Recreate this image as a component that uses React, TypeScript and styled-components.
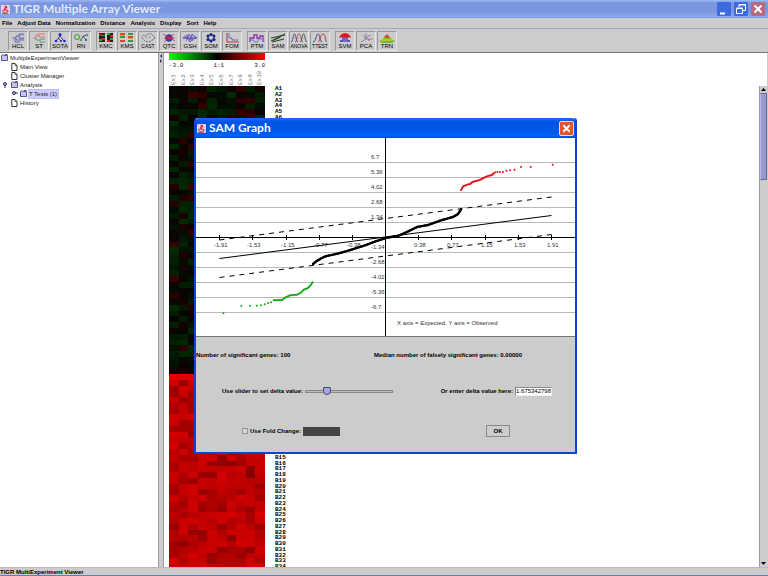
import React from "react";
import styled, { createGlobalStyle, css } from "styled-components";

const GlobalStyle = createGlobalStyle`
  * { box-sizing: border-box; }
  html, body { margin: 0; height: 100%; overflow: hidden; }
  body, button, input { font-family: "Liberation Sans", Arial, sans-serif; font-size: 6px; color: #000; }
`;

const Window = styled.div`
  position: relative;
  display: flex;
  flex-direction: column;
  height: 100vh;
  background: #ccc;
  overflow: hidden;
`;

const TitleBar = styled.header`
  display: flex;
  align-items: center;
  height: 18px;
  flex: none;
  padding: 0 3px 0 1px;
  gap: 3px;
  background: linear-gradient(#9db9f5 0, #7c97e2 3px, #7a95de 11px, #86a4ea 15px, #86a8ee 17px, #7890cc 18px);
`;

const Title = styled.h1`
  flex: 1;
  margin: 0;
  font: 700 12px/16px Lato, sans-serif;
  color: #e2e9fa;
  white-space: nowrap;
`;

const Caption = styled.button<{ $close?: boolean }>`
  width: 14px;
  height: 14px;
  padding: 0;
  border: 0;
  border-radius: 1px;
  background: ${(p) => (p.$close ? "#b56a80" : "#3c6be0")};
  svg { display: block; }
`;

const MenuBar = styled.nav`
  display: flex;
  align-items: center;
  gap: 5px;
  height: 11px;
  flex: none;
  padding: 0 2px;
  border-bottom: 1px solid #a8a8c0;
`;

const MenuItem = styled.button`
  padding: 0;
  border: 0;
  background: none;
  font-weight: bold;
  line-height: 8px;
`;

const Toolbar = styled.div`
  display: flex;
  align-items: center;
  height: 24px;
  flex: none;
  padding-left: 8px;
  gap: 5px;
  border-bottom: 1px solid #777;
`;

const ToolGroup = styled.div`
  display: flex;
  gap: 1px;
`;

const ToolButton = styled.button<{ $small?: boolean }>`
  display: flex;
  flex-direction: column;
  align-items: center;
  justify-content: center;
  width: 20px;
  height: 20px;
  padding: 1px 0 0;
  border: 1px solid #999;
  border-right-color: #e8e8e8;
  border-bottom-color: #e8e8e8;
  background: #ccc;
  font-size: ${(p) => (p.$small ? 5 : 6)}px;
  line-height: 7px;
  svg { display: block; flex: none; }
`;

const Body = styled.main`
  display: flex;
  flex: 1;
  min-height: 0;
`;

const TreePane = styled.ul`
  flex: none;
  width: 159px;
  margin: 0;
  padding: 0;
  list-style: none;
  background: #fff;
  border-right: 1px solid #999;
`;

const TreeRow = styled.li<{ $depth: number }>`
  display: flex;
  align-items: center;
  height: 9px;
  gap: 2px;
  padding-left: ${(p) => [1, 11, 20][p.$depth]}px;
  ${(p) => p.$depth > 0 && css`svg:first-child:nth-last-child(3) { margin-left: -9px; }`}
`;

const TreeLabel = styled.span<{ $selected?: boolean }>`
  line-height: 8px;
  color: #222;
  ${(p) => p.$selected && css`background: #ccccff; padding-right: 1px; outline: 1px solid #c0c0e8;`}
`;

const Splitter = styled.div`
  flex: none;
  width: 5px;
  background: #ccc;
  border-right: 1px solid #999;
`;

const Viewer = styled.section`
  display: flex;
  flex-direction: column;
  flex: 1;
  min-width: 0;
  padding-left: 5px;
  background: #fff;
  border-right: 1px solid #ccc;
`;

const Header = styled.div`
  flex: none;
  width: 96px;
  height: 33px;
  font-family: "Liberation Mono", monospace;
`;

const Gradient = styled.div`
  height: 7px;
  background: linear-gradient(90deg, #0f0, #000 50%, #f00);
`;

const Scale = styled.div`
  display: flex;
  justify-content: space-between;
  height: 10px;
  line-height: 12px;
  color: #222;
`;

const Columns = styled.div`
  display: grid;
  grid-template-columns: repeat(10, 1fr);
  height: 15px;
  color: #777;
`;

const ColumnName = styled.span`
  writing-mode: vertical-rl;
  transform: rotate(180deg);
  line-height: 9px;
`;

const Scroller = styled.div`
  display: flex;
  flex: 1;
  min-height: 0;
  overflow: hidden;
`;

const RowNames = styled.div`
  display: grid;
  grid-template-rows: repeat(84, 1fr);
  height: 484px;
  flex: 1;
  padding-left: 10px;
  font: bold 6px/6px "Liberation Mono", monospace;
  span { min-height: 0; }
`;

const ScrollTrack = styled.div`
  display: flex;
  flex-direction: column;
  width: 8px;
  background: #ccc;
  border-left: 1px solid #999;
`;

const ScrollButton = styled.button`
  height: 7px;
  padding: 0;
  border: 0;
  background: #ccc;
  svg { display: block; }
`;

const ScrollThumb = styled.div`
  height: 18%;
  background: #9999cc;
  border: 1px solid #666699;
  border-left-color: #b8b8e8;
`;

const Spacer = styled.div`
  flex: 1;
`;

const Status = styled.footer`
  flex: none;
  height: 9px;
  border-top: 1px solid #b8b8cc;
  border-bottom: 1px solid #5b7fc0;
  font-weight: bold;
  line-height: 9px;
`;

const Dialog = styled.section`
  position: absolute;
  left: 194px;
  top: 118px;
  width: 383px;
  background: #ccc;
  border: 2px solid #0a46d2;
  border-top: 0;
  border-radius: 3px 3px 0 0;
`;

const DialogTitle = styled.div`
  display: flex;
  align-items: center;
  height: 20px;
  gap: 3px;
  padding: 0 1px;
  background: linear-gradient(#1c6cf8 0, #0054e3 4px, #0058ee 14px, #0062fa 18px, #0044c4 20px);
  border-radius: 3px 3px 0 0;
`;

const DialogName = styled.h2`
  flex: 1;
  margin: 0;
  font: 700 12px/18px Lato, sans-serif;
  color: #fff;
`;

const CloseButton = styled.button`
  width: 15px;
  height: 15px;
  padding: 0;
  border: 1px solid #f4d8cc;
  border-radius: 2px;
  background: #e0532c;
  svg { display: block; }
`;

const Chart = styled.svg`
  display: block;
  width: 100%;
  background: #fff;
  border-bottom: 1px solid #777;
  font-family: "Liberation Sans", Arial, sans-serif;
  font-size: 6px;
`;

const Panel = styled.div`
  font-weight: bold;
`;

const PanelRow = styled.div<{ $height: number }>`
  display: grid;
  grid-template-columns: 178px 1fr;
  align-items: center;
  height: ${(p) => p.$height}px;
`;

const Field = styled.div<{ $indent?: number }>`
  display: flex;
  align-items: center;
  gap: 2px;
  padding-left: ${(p) => p.$indent ?? 0}px;
  white-space: nowrap;
`;

const SliderRow = styled.div`
  display: flex;
  align-items: center;
  justify-content: space-between;
  height: 38px;
  padding: 0 23px 0 26px;
`;

const Slider = styled.input`
  appearance: none;
  width: 88px;
  height: 9px;
  margin: 0;
  background: none;
  &::-webkit-slider-runnable-track {
    height: 3px;
    background: #bbb;
    border: 1px solid #888;
  }
  &::-webkit-slider-thumb {
    appearance: none;
    width: 8px;
    height: 8px;
    margin-top: -4px;
    background: #a8a8dc;
    border: 1px solid #444480;
    border-radius: 1px 1px 4px 4px;
  }
`;

const TextBox = styled.input<{ $off?: boolean }>`
  width: 37px;
  height: 9px;
  padding: 0;
  border: 1px solid #888;
  border-right-color: #eee;
  border-bottom-color: #eee;
  background: #fff;
  ${(p) => p.$off && css`background: #444; border-color: #444;`}
`;

const CheckBox = styled.input`
  appearance: none;
  width: 6px;
  height: 6px;
  margin: 0;
  border: 1px solid #999;
  background: #d4d4d4;
`;

const OkButton = styled.button`
  width: 24px;
  height: 12px;
  padding: 0;
  border: 1px solid #888;
  background: #ccc;
  font-weight: bold;
`;

const JavaCup = ({ size }: { size: number }) => (
  <svg width={size} height={size} viewBox="0 0 10 10" fill="none">
    <rect width="10" height="10" rx="1" fill="#e6d3e6" />
    <path d="M4 1.2c2 .6 2 1.6.5 2.3S4 5 5.5 5.2M6.500 1.500C5.800 2.200 5.800 3 7 3.600" stroke="#d4243c" strokeWidth="1.300" />
    <path d="M1.800 5.800h5.400c0 2-1 2.800-2.700 2.800S1.800 7.800 1.800 5.800zM7.200 6.200c1.600 0 1.200 1.500-.3 1.500M1 9.300h7" stroke="#c83450" />
  </svg>
);

const Cross = ({ size }: { size: number }) => (
  <svg width={size} height={size} viewBox="0 0 14 14">
    <path d="M3.500 3.500l7 7M10.500 3.500l-7 7" stroke="#fff" strokeWidth="2" />
  </svg>
);

const Folder = () => (
  <svg width="7" height="7" viewBox="0 0 7 7">
    <path d="M.5 6.500v-5L1.500.5 3 1.500h3.500v5z" fill="#c4c4f4" stroke="#55558c" />
    <path d="M4 .5h2.500" stroke="#55558c" />
  </svg>
);

const Leaf = () => (
  <svg width="7" height="8" viewBox="0 0 7 8">
    <path d="M.8.5h3.200l2 2v5H.8z" fill="#fff" stroke="#333" />
    <path d="M4 .5v2h2" fill="none" stroke="#333" strokeWidth=".7" />
  </svg>
);

const Handle = ({ open }: { open?: boolean }) => (
  <svg width="7" height="7" viewBox="0 0 7 7">
    <circle cx="3" cy="3" r="1.500" fill="#aac" stroke="#336" />
    <path d={open ? "M3 4v3" : "M4 3h3"} stroke="#336" />
  </svg>
);

const art: Record<string, React.ReactNode> = {
  HCL: <g fill="none" stroke="#6464b8"><path d="M14 1H9v4h5M9 3H6v4h8M6 5H2M10 9H5V6" /><path d="M9 2h5M9 6h5" strokeWidth=".6" /></g>,
  ST: <g fill="none"><path d="M14 1H8v3h6M8 2H5v3H2" stroke="#d87868" /><path d="M14 6H9v3h5M9 7H5V5" stroke="#58a080" /></g>,
  SOTA: <g><path d="M8 1v2L4 8M8 3l4 5M6 5l3 3" fill="none" stroke="#446" /><g fill="#22c"><circle cx="8" cy="1.500" r="1.500" /><circle cx="4" cy="8" r="1.300" /><circle cx="9" cy="8" r="1.100" /><circle cx="12.500" cy="8" r="1.300" /></g></g>,
  RN: <g fill="none"><circle cx="4" cy="4" r="2.500" stroke="#393" /><path d="M8 7l2-4 4-1M10 3l3 4" stroke="#558" /><g fill="#4a5"><circle cx="8" cy="7" r="1.300" /><circle cx="14" cy="2" r="1.200" /></g><circle cx="13" cy="7" r="1" fill="#33a" /></g>,
  KMC: <g><path fill="#222" d="M1 0h6v9H1zM9 0h6v9H9z" /><path fill="#d22" d="M1 1h3v2H1zM4 5h3v2H4zM12 2h3v2h-3zM9 7h3v2H9z" /><path fill="#2a3" d="M4 2h3v1H4zM1 6h3v2H1zM9 0h3v2H9zM12 5h3v2h-3z" /></g>,
  KMS: <g><path fill="#d43" d="M1 0h5v2H1zM9 3h5v2H9zM1 7h5v2H1z" /><path fill="#395" d="M9 0h5v2H9zM1 3h5v2H1zM9 7h5v2H9z" /><path d="M1 2.500h5M9 5.500h5" stroke="#ca3" /></g>,
  CAST: <g fill="none" stroke="#667"><path d="M3 6c-3-2 0-5 3-3 1-3 7-3 7 0 3 1 1 4-1 4-2 3-7 2-9-1z" strokeDasharray="2 1" /><path d="M5 4l2 1M9 3l1 2" stroke="#88b" /></g>,
  QTC: <g fill="none"><circle cx="8" cy="5" r="3.300" fill="#448" stroke="#33a" /><path d="M2 1l12 7M13 1L3 9M3 5h11" stroke="#a36" strokeWidth=".8" /><circle cx="8" cy="5" r="1.600" fill="#d23" /></g>,
  GSH: <g fill="#a8a0dc" stroke="#6048b0" strokeWidth=".8"><path d="M1 5l4-3 3 5 2-6 5 4-4 1-3 3-3-4z" /><path fill="none" d="M4 8l3-7 4 7M1 5h14" /></g>,
  SOM: <g><circle cx="8" cy="4.500" r="3" fill="none" stroke="#147" /><g fill="#128"><circle cx="8" cy="1.500" r="1.500" /><circle cx="11" cy="3" r="1.500" /><circle cx="11" cy="6.500" r="1.500" /><circle cx="8" cy="8" r="1.500" /><circle cx="5" cy="6.500" r="1.500" /><circle cx="5" cy="3" r="1.500" /></g></g>,
  FOM: <g fill="none"><path d="M3 0v9h12" stroke="#b33" /><path d="M5 0v5h3v2h6" stroke="#66b" /></g>,
  PTM: <g fill="none"><path d="M1 9V5h4V2h3v3h3V3h3v6" stroke="#83a" strokeWidth="1.300" /><path d="M2 7h3v2h4V6h4" stroke="#66c" strokeWidth=".8" /></g>,
  SAM: <g fill="none"><path d="M1 8L15 1M1 5l14-3M2 9l12-3" stroke="#333" /><path d="M3 8c3-3 5-1 9-6" stroke="#262" strokeWidth="1.300" /></g>,
  ANOVA: <g fill="none" strokeWidth=".9"><path d="M0 9c2 0 2-8 3.500-8S5 9 7 9" stroke="#338" /><path d="M4 9c2 0 2-8 4-8s2 8 4 8" stroke="#a44" /><path d="M9 9c2 0 2-8 3.500-8S14 9 16 9" stroke="#353" /></g>,
  TTEST: <g fill="none"><path d="M1 9c3 0 3-8 5-8s2 8 4 8" stroke="#448" /><path d="M6 9c2 0 2-8 5-8s2 8 4 8" stroke="#a44" /></g>,
  SVM: <g fill="none"><path d="M3 4c0-5 10-5 10 0z" fill="#e11" /><path d="M8 4v5M6 4v4H3M10 4v4h3" stroke="#33c" strokeWidth="1.300" /><path d="M2 4h12" stroke="#c22" /></g>,
  PCA: <g fill="none" stroke="#8070a8" strokeWidth=".8"><path d="M8 0v6L3 9M8 6h7M5 2l5 4M9 4l4-2" /><path d="M6 5h1M10 7h2" stroke="#b46" /></g>,
  TRN: <g><path d="M0 8c4-1 5-5 8-5s4 3 8 5l-3 2H3z" fill="#7cb82c" /><path d="M5 4l3-3 3 3-3 1z" fill="#d84c28" /><path d="M2 7h12" stroke="#dd3" /></g>,
};

const groups = [
  ["HCL", "ST", "SOTA", "RN"],
  ["KMC", "KMS", "CAST", "QTC", "GSH", "SOM", "FOM"],
  ["PTM", "SAM", "ANOVA", "TTEST"],
  ["SVM", "PCA", "TRN"],
];

const menus = ["File", "Adjust Data", "Normalization", "Distance", "Analysis", "Display", "Sort", "Help"];

const noise = (n: number) => {
  const v = Math.sin(n * 127.1 + 11.7) * 43758.5453;
  return v - Math.floor(v);
};

const cellColour = (row: number, col: number) => {
  const a = noise(row * 10 + col + 1);
  const b = noise(row * 31 + col * 7 + 500);
  if (row >= 50) return `rgb(${row === 50 ? 225 : Math.round(132 + 80 * Math.sqrt(a))},0,0)`;
  if (a < 0.5) return `rgb(2,${Math.round(10 + b * 32)},2)`;
  if (a > 0.76) return `rgb(${Math.round(14 + b * 46)},0,0)`;
  return "#080502";
};

const HeatMap = () => (
  <svg width="96" height="484" viewBox="0 0 10 84" preserveAspectRatio="none" shapeRendering="crispEdges">
    {Array.from({ length: 840 }, (_, i) => (
      <rect key={i} x={i % 10} y={Math.floor(i / 10)} width="1" height="1" fill={cellColour(Math.floor(i / 10), i % 10)} />
    ))}
  </svg>
);

type Point = [number, number];

const along = (points: Point[], step: number): Point[] => {
  const out: Point[] = [];
  for (let i = 1; i < points.length; i++) {
    const [x0, y0] = points[i - 1];
    const [x1, y1] = points[i];
    const n = Math.max(1, Math.round(Math.hypot(x1 - x0, y1 - y0) / step));
    for (let k = 0; k < n; k++) out.push([x0 + ((x1 - x0) * k) / n, y0 + ((y1 - y0) * k) / n]);
  }
  out.push(points[points.length - 1]);
  return out;
};

const middle: Point[] = [[313, 264], [316, 261.5], [321, 258.5], [325, 256.5], [340, 253], [352, 249.5], [366, 245], [375, 241.5], [386, 238], [399, 235.5], [409, 231], [417, 227], [428, 225], [442, 220], [453, 217], [458, 214], [461, 209.5]];
const upper: Point[] = [[461, 190], [463, 186.5], [467, 184.7], [470, 184], [473, 181.7], [480, 180], [484, 177.7], [488, 176], [492, 175], [494, 173]];
const upperDots: Point[] = [[495.5, 172.3], [497.5, 172], [500, 172], [503, 172], [506.5, 170.7], [510, 170.3], [514.5, 169.7], [521, 167], [530.7, 167], [552.7, 164.7]];
const lower: Point[] = [[273.7, 300.3], [282, 300], [285, 297.7], [290, 295.3], [297, 294.7], [301, 292.7], [304, 289.5], [307, 288.5], [310, 286], [312.5, 282.3]];
const lowerDots: Point[] = [[223.3, 313.3], [241.3, 306], [250, 305.7], [256.7, 305.7], [261, 305.3], [264.7, 304.3], [268, 303], [271, 302.3]];

const Dots = ({ points, colour, r }: { points: Point[]; colour: string; r: number }) => (
  <g fill={colour}>
    {points.map(([x, y], i) => <circle key={i} cx={x} cy={y} r={r} />)}
  </g>
);

const gridLines = [162, 177, 192, 207, 222, 252, 267, 282, 297, 312];
const yLabels = ["6.7", "5.36", "4.02", "2.68", "1.34", "-1.34", "-2.68", "-4.02", "-5.36", "-6.7"];
const xTicks: [string, number][] = [["-1.91", 219], ["-1.53", 252], ["-1.15", 286], ["-0.77", 319], ["-0.38", 352], ["0.38", 418], ["0.77", 451], ["1.15", 485], ["1.53", 518], ["1.91", 551]];

const SamChart = () => (
  <Chart viewBox="196 138 379 198">
    {gridLines.map((y) => <path key={y} d={`M196 ${y + 0.5}H576`} stroke="#b8b8b8" />)}
    <g fill="#333">
      {yLabels.map((t, i) => <text key={t} x="371" y={gridLines[i] - 3}>{t}</text>)}
      {xTicks.map(([t, x]) => <text key={t} x={t[0] === "-" ? x - 5 : x - 4} y="247">{t}</text>)}
      <text x="397" y="325">X axis = Expected, Y axis = Observed</text>
    </g>
    <path d="M196 237.500H576M385.500 138V337" stroke="#000" fill="none" />
    <path d={xTicks.map(([, x]) => `M${x + 0.5} 235v5`).join("")} stroke="#000" />
    <path d="M219.500 258.500L551.500 215.500" stroke="#000" />
    <path d="M219.500 240L551.500 197M219.500 277.500L551.500 234.500" stroke="#000" strokeDasharray="5 5" />
    <Dots points={along(middle, 1)} colour="#000" r={1.2} />
    <Dots points={along(upper, 1)} colour="#e8101c" r={1} />
    <Dots points={upperDots} colour="#e8101c" r={1} />
    <Dots points={along(lower, 1)} colour="#18a818" r={1} />
    <Dots points={lowerDots} colour="#18a818" r={1} />
  </Chart>
);

export default function App() {
  return (
    <Window>
      <GlobalStyle />
      <TitleBar>
        <JavaCup size={9} />
        <Title>TIGR Multiple Array Viewer</Title>
        <Caption aria-label="Minimize">
          <svg width="14" height="14"><path d="M3 11.500h5" stroke="#fff" strokeWidth="2" /></svg>
        </Caption>
        <Caption aria-label="Restore">
          <svg width="14" height="14" fill="none" stroke="#fff"><path d="M5 5V2.500h6.500v6H9M5 3h7M2.500 6.500h6v5h-6zM2.500 6h6" /></svg>
        </Caption>
        <Caption aria-label="Close" $close><Cross size={14} /></Caption>
      </TitleBar>
      <MenuBar>{menus.map((m) => <MenuItem key={m}>{m}</MenuItem>)}</MenuBar>
      <Toolbar>
        {groups.map((g) => (
          <ToolGroup key={g[0]}>
            {g.map((name) => (
              <ToolButton key={name} $small={name.length > 4 || name === "CAST"}>
                <svg width="16" height="10" viewBox="0 0 16 10">{art[name]}</svg>
                {name}
              </ToolButton>
            ))}
          </ToolGroup>
        ))}
      </Toolbar>
      <Body>
        <TreePane>
          <TreeRow $depth={0}><Folder /><TreeLabel>MultipleExperimentViewer</TreeLabel></TreeRow>
          <TreeRow $depth={1}><Leaf /><TreeLabel>Main View</TreeLabel></TreeRow>
          <TreeRow $depth={1}><Leaf /><TreeLabel>Cluster Manager</TreeLabel></TreeRow>
          <TreeRow $depth={1}><Handle open /><Folder /><TreeLabel>Analysis</TreeLabel></TreeRow>
          <TreeRow $depth={2}><Handle /><Folder /><TreeLabel $selected>T Tests (1)</TreeLabel></TreeRow>
          <TreeRow $depth={1}><Leaf /><TreeLabel>History</TreeLabel></TreeRow>
        </TreePane>
        <Splitter>
          <svg width="4" height="12" viewBox="0 0 4 12"><path d="M3 1v4L1 3zM1 6v4l2-2z" fill="#333366" /></svg>
        </Splitter>
        <Viewer>
          <Header>
            <Gradient />
            <Scale><span>-3.0</span><span>1:1</span><span>3.0</span></Scale>
            <Columns>
              {Array.from({ length: 10 }, (_, i) => <ColumnName key={i}>Ex{i + 1}</ColumnName>)}
            </Columns>
          </Header>
          <Scroller>
            <HeatMap />
            <RowNames>
              {Array.from({ length: 84 }, (_, i) => <span key={i}>{i < 50 ? `A${i + 1}` : `B${i - 49}`}</span>)}
            </RowNames>
            <ScrollTrack>
              <ScrollButton aria-label="Scroll up"><svg width="7" height="7"><path d="M1 5h5L3.500 2z" /></svg></ScrollButton>
              <ScrollThumb />
              <Spacer />
              <ScrollButton aria-label="Scroll down"><svg width="7" height="7"><path d="M1 2h5L3.500 5z" /></svg></ScrollButton>
            </ScrollTrack>
          </Scroller>
        </Viewer>
      </Body>
      <Status>TIGR MultiExperiment Viewer</Status>
      <Dialog role="dialog" aria-label="SAM Graph">
        <DialogTitle>
          <JavaCup size={9} />
          <DialogName>SAM Graph</DialogName>
          <CloseButton aria-label="Close dialog"><Cross size={13} /></CloseButton>
        </DialogTitle>
        <SamChart />
        <Panel>
          <PanelRow $height={35}>
            <span>Number of significant genes: 100</span>
            <span>Median number of falsely significant genes: 0.00000</span>
          </PanelRow>
          <SliderRow>
            <Field>
              <label htmlFor="delta-slider">Use slider to set delta value:</label>
              <Slider id="delta-slider" type="range" min="0" max="100" defaultValue="22" />
            </Field>
            <Field>
              <label htmlFor="delta">Or enter delta value here:</label>
              <TextBox id="delta" defaultValue="1.675342798" />
            </Field>
          </SliderRow>
          <PanelRow $height={42}>
            <Field $indent={46}>
              <CheckBox id="fold" type="checkbox" />
              <label htmlFor="fold">Use Fold Change:</label>
              <TextBox $off disabled aria-label="Fold change" />
            </Field>
            <Field $indent={112}><OkButton>OK</OkButton></Field>
          </PanelRow>
        </Panel>
      </Dialog>
    </Window>
  );
}
